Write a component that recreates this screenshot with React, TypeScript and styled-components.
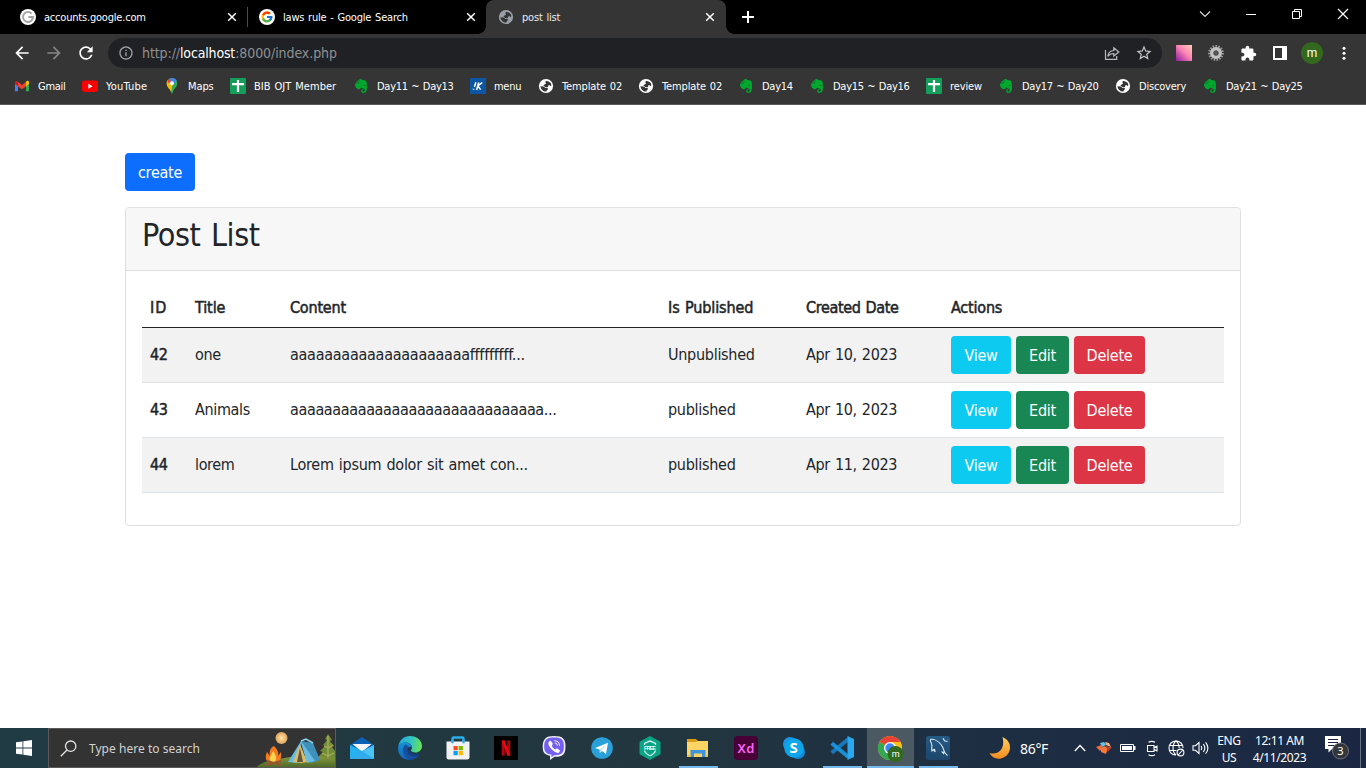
import React from 'react';
import styled, { createGlobalStyle, css } from 'styled-components';
import { MdArrowBack, MdArrowForward, MdRefresh, MdInfoOutline, MdStarBorder, MdExtension } from 'react-icons/md';
import { FaEvernote } from 'react-icons/fa';
import { FcGoogle } from 'react-icons/fc';

const uiFont = '"DejaVu Sans Condensed", "DejaVu Sans", sans-serif';
const shellFont = '"Noto Sans", "Open Sans", sans-serif';

const GlobalStyle = createGlobalStyle`
  *, *::before, *::after { box-sizing: border-box; }
  html, body { margin: 0; padding: 0; background: #fff; overflow: hidden; }
  body { font-family: ${uiFont}; font-stretch: condensed; }
  svg { display: block; flex: none; }
`;

const Screen = styled.div`
  width: 1366px;
  height: 768px;
  display: flex;
  flex-direction: column;
  background: #fff;
`;

/* ---------- browser frame ---------- */

const TabStrip = styled.header`
  height: 34px;
  flex: none;
  background: #000;
  display: flex;
  justify-content: space-between;
`;
const Tabs = styled.div`
  display: flex;
  padding-left: 8px;
`;
const Tab = styled.div<{ $active?: boolean; $divider?: boolean }>`
  position: relative;
  width: ${p => (p.$active ? 240 : 239)}px;
  height: 34px;
  display: flex;
  align-items: center;
  padding: 0 ${p => (p.$active ? 11 : 10)}px 0 12px;
  color: ${p => (p.$active ? '#e8eaed' : '#fff')};
  font-size: 11px;
  ${p => p.$active && css`
    background: #353535;
    border-radius: 8px 8px 0 0;
    &::before, &::after {
      content: '';
      position: absolute;
      bottom: 0;
      width: 8px;
      height: 8px;
    }
    &::before { left: -8px; background: radial-gradient(circle at 0 0, transparent 7.5px, #353535 8px); }
    &::after { right: -8px; background: radial-gradient(circle at 100% 0, transparent 7.5px, #353535 8px); }
  `}
  ${p => p.$divider && css`
    &::after {
      content: '';
      position: absolute;
      right: -1px;
      top: 7px;
      width: 1px;
      height: 20px;
      background: #4b4b4b;
    }
  `}
`;
const TabTitle = styled.span`
  flex: 1;
  margin-left: 8px;
  white-space: nowrap;
  letter-spacing: -0.2px;
  word-spacing: 0.9px;
`;
const NewTab = styled.div`
  width: 44px;
  display: grid;
  place-items: center;
`;
const WindowControls = styled.div`
  display: flex;
  height: 28px;
  & > svg { width: 46px; height: 28px; }
`;

const Toolbar = styled.div`
  height: 38px;
  flex: none;
  background: #353535;
  display: flex;
  align-items: center;
  color: #fff;
`;
const NavButtons = styled.div`
  width: 108px;
  display: flex;
  gap: 12px;
  padding-left: 12px;
`;
const AddressBar = styled.div`
  width: 1054px;
  height: 30px;
  border-radius: 15px;
  background: #202124;
  display: flex;
  align-items: center;
  padding: 0 9px 0 10px;
  color: #9aa0a6;
`;
const Address = styled.div`
  flex: 1;
  margin-left: 8px;
  color: #8d9093;
  font-size: 14px;
  letter-spacing: -0.08px;
  white-space: nowrap;
  b { font-weight: 400; color: #fff; letter-spacing: -0.16px; }
`;
const AddressActions = styled.div`
  display: flex;
  align-items: center;
  gap: 15px;
`;
const Extensions = styled.div`
  display: grid;
  grid-template-columns: repeat(6, 32px);
  place-items: center;
  padding-left: 6px;
`;
const Avatar = styled.div`
  width: 22px;
  height: 22px;
  border-radius: 50%;
  background: #33691e;
  font: 12px/22px Roboto, sans-serif;
  text-align: center;
`;

const Bookmarks = styled.nav`
  height: 33px;
  flex: none;
  background: #353535;
  border-bottom: 1px solid #5b5b5b;
  display: flex;
  padding: 0 0 4px 14px;
`;
const Bookmark = styled.div<{ $w: number; $track?: number }>`
  width: ${p => p.$w}px;
  display: flex;
  align-items: center;
  gap: 8px;
  color: #fff;
  font-size: 11px;
  letter-spacing: ${p => p.$track ?? -0.28}px;
  word-spacing: 0.7px;
  white-space: nowrap;
`;

/* ---------- page ---------- */

const Page = styled.main`
  flex: 1;
  padding: 48px 125px 0;
  color: #212529;
  font-size: 16px;
  line-height: 24px;
  letter-spacing: -0.36px;
  word-spacing: 0.9px;
`;
const buttonColors = {
  create: '#0d6efd',
  view: '#0dcaf0',
  edit: '#198754',
  remove: '#dc3545',
};
const Button = styled.button<{ $kind: keyof typeof buttonColors; $w: number }>`
  width: ${p => p.$w}px;
  height: 38px;
  border: 0;
  border-radius: 4px;
  padding: 1px 0 0;
  background: ${p => buttonColors[p.$kind]};
  color: #fff;
  font: inherit;
  letter-spacing: -0.25px;
  display: block;
`;
const Card = styled.section`
  margin-top: 16px;
  border: 1px solid #dfdfdf;
  border-radius: 4px;
  height: 319px;
`;
const CardHeader = styled.div`
  height: 63px;
  padding: 8px 16px;
  background: #f7f7f7;
  border-bottom: 1px solid #dfdfdf;
  border-radius: 3px 3px 0 0;
`;
const CardTitle = styled.h2`
  margin: 0;
  font-size: 32px;
  font-weight: 400;
  line-height: 38px;
  letter-spacing: -0.45px;
  word-spacing: 2px;
`;
const CardBody = styled.div`
  padding: 16px;
`;
const Row = styled.div<{ $head?: boolean; $striped?: boolean }>`
  display: grid;
  grid-template-columns: 45px 95px 378px 138px 145px 1fr;
  align-items: center;
  height: ${p => (p.$head ? 41 : 55)}px;
  padding-top: ${p => (p.$head ? 1 : 0)}px;
  border-bottom: 1px solid ${p => (p.$head ? '#212529' : '#dee2e6')};
  background: ${p => (p.$striped ? '#f2f2f2' : '#fff')};
`;
const Cell = styled.div<{ $strong?: boolean; $track?: number }>`
  padding-left: 8px;
  white-space: nowrap;
  ${p => p.$strong && css`-webkit-text-stroke: 0.5px #212529;`}
  letter-spacing: ${p => p.$track ?? -0.36}px;
`;
const Actions = styled.div`
  display: flex;
  gap: 5px;
  padding-left: 8px;
`;

/* ---------- taskbar ---------- */

const Taskbar = styled.footer`
  height: 40px;
  flex: none;
  display: flex;
  background: linear-gradient(90deg, #213b44 0%, #22363f 50%, #1e2f42 68%, #1b2742 100%);
  color: #fff;
  font-family: ${shellFont};
  font-stretch: normal;
  font-size: 12px;
`;
const Start = styled.div`
  width: 48px;
  flex: none;
  display: grid;
  place-items: center;
`;
const Search = styled.div`
  width: 288px;
  flex: none;
  margin-right: 2px;
  display: flex;
  align-items: center;
  background: #333;
  border: 1px solid #5c5b59;
  color: #d2d2d2;
  padding-left: 11px;
`;
const SearchHint = styled.span`
  flex: 1;
  margin-left: 12px;
  letter-spacing: 0.03px;
`;
const Slot = styled.div<{ $running?: boolean; $focused?: boolean }>`
  width: 48px;
  flex: none;
  height: 40px;
  display: grid;
  place-items: center;
  ${p => p.$running && css`background: linear-gradient(#76b9ed, #76b9ed) center bottom / 39px 2px no-repeat;`}
  ${p => p.$focused && css`background: linear-gradient(#76b9ed, #76b9ed) center bottom / 47px 2px no-repeat,
    linear-gradient(#4b5963, #4b5963) center / 47px 40px no-repeat;`}
`;
const Tray = styled.div`
  flex: 1;
  display: flex;
  align-items: center;
  padding-left: 26px;
  & > * { flex: none; }
`;
const Temperature = styled.div`
  width: 48px;
  margin-left: 8px;
  font-size: 14px;
  letter-spacing: -0.3px;
`;
const TraySlot = styled.div`
  width: 24px;
  display: grid;
  place-items: center;
`;
const Stack = styled.div<{ $w: number }>`
  width: ${p => p.$w}px;
  text-align: center;
  line-height: 17px;
  padding-top: 1px;
  letter-spacing: -0.4px;
  white-space: nowrap;
`;
const Notifications = styled.div`
  width: 47px;
  display: grid;
  place-items: center;
`;
const DesktopEdge = styled.div`
  width: 5px;
  height: 40px;
  border-left: 1px solid #66717f;
`;

/* ---------- icons ---------- */

const CloseGlyph = () => (
  <svg width="10" height="10" viewBox="0 0 10 10" stroke="#fff" strokeWidth="1.5"><path d="M1.2 1.2l7.6 7.6M8.800 1.200L1.200 8.800" /></svg>
);
const GoogleDisc = ({ gray }: { gray?: boolean }) => (
  <svg width="16" height="16" viewBox="0 0 16 16">
    <circle cx="8" cy="8" r="8" fill="#fff" />
    {gray
      ? <path d="M11.700 4.600A5 5 0 1 0 13 8H8.300" fill="none" stroke="#a6a6a6" strokeWidth="2" />
      : <FcGoogle x={1.500} y={1.500} size={13} />}
  </svg>
);
const Globe = ({ color = '#fff', hole = '#353535' }: { color?: string; hole?: string }) => (
  <svg width="16" height="16" viewBox="0 0 16 16">
    <circle cx="8" cy="8" r="7.100" fill={color} />
    <path d="M8 2.700c.9.600 3.600.2 5 2.900l.4 1.800-1.100.6-1-1-1.100.4c.3 1.300-.8 2.300-2 1.900-1.500-.1-1.500-1.100-2.800-1.500L6.500 6.500l1.600-.9-.8-1.300z" fill={hole} />
    <path d="M2.400 8.300l3 .1c1.400.1 1.400 1.200 2.300 1.500l1.800.1.700 1.200-1.400.8-.2 1.500c-3 .5-5.700-1.600-6.200-5.200z" fill={hole} />
  </svg>
);
const Gmail = () => (
  <svg width="16" height="16" viewBox="0 0 16 16">
    <path d="M1 4v9.200h3V7z" fill="#4285f4" /><path d="M15 4v9.200h-3V7z" fill="#34a853" />
    <path d="M12 5v3.400l3-2.300V4.300c0-1.600-1.800-2-3-.9z" fill="#fbbc04" />
    <path d="M4 8.400L8 11.300l4-2.900V3.800L8 6.900 4 3.800z" fill="#ea4335" />
    <path d="M1 4.300v1.800l3 2.300V3.800C2.800 2.500 1 2.900 1 4.300z" fill="#c5221f" />
  </svg>
);
const YouTube = () => (
  <svg width="16" height="16" viewBox="0 0 16 16"><rect y="2.500" width="16" height="11.500" rx="3" fill="#f00" /><path d="M6.400 5.800v4.900l4.200-2.450z" fill="#fff" /></svg>
);
const Maps = () => (
  <svg width="16" height="16" viewBox="0 0 16 16">
    <path d="M8 0c3.200 0 5.300 2.400 5.300 5.300 0 4-4 5.300-4.700 9.700-.2.900-1 .9-1.200 0C6.700 10.700 2.700 9.300 2.700 5.300 2.700 2.400 4.900 0 8 0z" fill="#34a853" />
    <path d="M3.900 2L8 5.500 3.700 9.100C2.200 6.800 2.300 3.800 3.900 2z" fill="#fbbc04" />
    <path d="M3.900 2a5.200 5.200 0 0 1 2.500-1.700L7 4.200 3.600 5z" fill="#ea4335" />
    <path d="M6.200.4C8.800-.5 11.500.6 12.700 3L8 8z" fill="#4285f4" />
    <path d="M3.700 9.100l4.600-4 .9 4.600L7 13.700c-.8-1.900-2-2.900-3.300-4.600z" fill="#fbbc04" />
    <path d="M12.700 3c1.500 4.300-2.700 6.200-3.900 10.500L7.500 13 8 8.300z" fill="#34a853" />
    <circle cx="8" cy="5.300" r="2" fill="#fff" />
  </svg>
);
const Sheet = () => (
  <svg width="16" height="16" viewBox="0 0 16 16"><rect width="16" height="16" rx="1" fill="#139f5a" /><path d="M2 6.200h12M8 2v12" stroke="#fff" strokeWidth="2.200" /></svg>
);
const Evernote = () => <FaEvernote size={16} color="#00a82d" />;
const MenuLogo = () => (
  <svg width="16" height="16" viewBox="0 0 16 16"><rect width="16" height="16" fill="#0b57a4" /><path d="M5.900 4.200L4.400 9M3.700 10.800l-.3 1M12.300 4.500L8 7.800M8.700 4.500L6.600 12M7.900 8l2.700 3.600" stroke="#fff" strokeWidth="1.500" fill="none" /></svg>
);

const shortcuts: { label: string; w: number; icon: React.ReactNode; track?: number }[] = [
  { label: 'Gmail', w: 68, icon: <Gmail /> },
  { label: 'YouTube', w: 82, icon: <YouTube />, track: 0.2 },
  { label: 'Maps', w: 66, icon: <Maps />, track: -0.1 },
  { label: 'BIB OJT Member', w: 123, icon: <Sheet />, track: 0.04 },
  { label: 'Day11 ~ Day13', w: 117, icon: <Evernote /> },
  { label: 'menu', w: 68, icon: <MenuLogo /> },
  { label: 'Template 02', w: 100, icon: <Globe />, track: -0.12 },
  { label: 'Template 02', w: 100, icon: <Globe />, track: -0.12 },
  { label: 'Day14', w: 71, icon: <Evernote /> },
  { label: 'Day15 ~ Day16', w: 117, icon: <Evernote /> },
  { label: 'review', w: 72, icon: <Sheet />, track: -0.1 },
  { label: 'Day17 ~ Day20', w: 117, icon: <Evernote /> },
  { label: 'Discovery', w: 87, icon: <Globe />, track: -0.2 },
  { label: 'Day21 ~ Day25', w: 120, icon: <Evernote /> },
];

const columns: { label: string; track: number }[] = [
  { label: 'ID', track: 1 },
  { label: 'Title', track: -0.1 },
  { label: 'Content', track: -0.2 },
  { label: 'Is Published', track: -0.1 },
  { label: 'Created Date', track: -0.35 },
  { label: 'Actions', track: -0.2 },
];

const posts = [
  { id: 42, title: 'one', content: 'aaaaaaaaaaaaaaaaaaaaafffffffff...', state: 'Unpublished', date: 'Apr 10, 2023', track: -0.26 },
  { id: 43, title: 'Animals', content: 'aaaaaaaaaaaaaaaaaaaaaaaaaaaaaa...', state: 'published', date: 'Apr 10, 2023' },
  { id: 44, title: 'lorem', content: 'Lorem ipsum dolor sit amet con...', state: 'published', date: 'Apr 11, 2023', track: -0.27 },
];

const Campsite = () => (
  <svg width="78" height="38" viewBox="0 0 78 38">
    <defs>
      <linearGradient id="hill" x1="0" y1="0" x2="0" y2="1"><stop stopColor="#8b9a3c" /><stop offset="1" stopColor="#4d6b2b" /></linearGradient>
      <radialGradient id="moonDisc"><stop stopColor="#ffe3a1" /><stop offset="1" stopColor="#dfa35f" /></radialGradient>
    </defs>
    <path d="M71 5l4 6-2 1 4 5-2 1 3 4v10H62V27l4-4-3-1 5-5-2-1 4-5-2-1z" fill="#718d3a" />
    <path d="M71 7v23M67 17l4 2 5-3M65 24l6 3 6-3" stroke="#a9ae56" strokeWidth="1.300" fill="none" />
    <path d="M0 38c4-5 13-6 22-8 18-4 36-4 56 0v8z" fill="url(#hill)" />
    <circle cx="24.500" cy="9" r="6" fill="url(#moonDisc)" />
    <path d="M17 17c4 4 5 7 4 10l3-4c1 6-1 10-5 11h-6c-5-2-5-7-3-11l3 4c-1-4 0-8 4-10z" fill="#f47b20" />
    <path d="M16 22c3 4 4 7 2 11h-4c-3-4 0-6 2-11z" fill="#ffd34e" />
    <path d="M9 36l15-4M10 32l14 4" stroke="#96572d" strokeWidth="2.300" />
    <path d="M44 12l12 2 7 17-9 3z" fill="#3f91bc" /><path d="M44 12L31 33l9 1 4-20 6 20 8-2z" fill="#66bce1" />
    <path d="M43 15l-7 18 8 1 6-1z" fill="#d8bd73" /><path d="M43 19l-3 14h6z" fill="#665638" />
    <path d="M44 12l5-2 7 4" stroke="#8bd8ef" strokeWidth="1.500" fill="none" />
  </svg>
);

const MailIcon = () => (
  <svg width="24" height="24" viewBox="0 0 24 24">
    <path d="M0 9L12 1l12 8v4H0z" fill="#0b60b5" /><path d="M2.500 8h19L12 16z" fill="#f4f5f8" />
    <path d="M0 9l12 6L24 9v14H0z" fill="#25b1ef" /><path d="M0 23L24 9v14z" fill="#5bcbf7" opacity=".7" /><path d="M12 15L24 23H0z" fill="#2aa5eb" opacity=".8" />
  </svg>
);
const EdgeIcon = () => (
  <svg width="24" height="24" viewBox="0 0 24 24">
    <defs>
      <linearGradient id="edgeTop" x1="0" y1=".4" x2="1" y2=".5"><stop stopColor="#20a6df" /><stop offset=".55" stopColor="#35c6bd" /><stop offset="1" stopColor="#6be34f" /></linearGradient>
      <linearGradient id="edgeSide" x1="0" y1="0" x2="0" y2="1"><stop stopColor="#1692d8" /><stop offset="1" stopColor="#1064b7" /></linearGradient>
    </defs>
    <path d="M.4 10C1.300 4 6 0 12 0c7 0 12 4.600 12 10 0 4-3 6.500-6.500 6.500-3 0-4.500-1-4.500-1.900 0-.8 1-1.400 1-3C14 8.800 11.200 6.600 7.700 6.600 4.500 6.600 1.700 8 .4 10z" fill="url(#edgeTop)" />
    <path d="M.3 10.300C1.200 7.800 4.300 6.300 7.700 6.600c3.500.1 6.100 2.200 6.200 4.800-1.300-1.100-3.800-.7-4.800 1.700-1.300 3.300.7 8.400 5.200 10.200C7.200 25.400.8 20.800.1 14z" fill="url(#edgeSide)" />
    <path d="M9.700 12c-1.700 1.500-2 5.500.2 8.300 2.500 3.200 7 2.800 11-1.400 1.300-1 .4-2-.8-1.400-3.400 1.500-8.200.4-10.400-5.500z" fill="#123f82" /><path d="M7.500 8.300C3.600 12 4.200 19.700 11.200 23.800 14.500 24.300 19 22.500 21.600 18.700c-3 2.200-8.200 2.600-11-1-2.300-2.700-1.500-6 .4-6.900-1-.8-2.400-1.700-3.500-2.500z" fill="#174f9e" />
  </svg>
);
const StoreIcon = () => (
  <svg width="24" height="24" viewBox="0 0 24 24">
    <path d="M6.500 7V2.500q0-1 1-1h9q1 0 1 1V7" fill="none" stroke="#29aee8" strokeWidth="2.400" /><path d="M.5 5.500h23v16q0 2-2 2h-19q-2 0-2-2z" fill="#f2f2f2" /><path d="M6.500 4v3.300M17.500 4v3.300" stroke="#29aee8" strokeWidth="2.400" />
    <path d="M7.500 10h4.300v4.200H7.500z" fill="#f25022" /><path d="M12.600 10h4.300v4.200h-4.300z" fill="#7fba00" /><path d="M7.500 15h4.300v4.200H7.500z" fill="#00a4ef" /><path d="M12.600 15h4.300v4.200h-4.300z" fill="#ffb900" />
  </svg>
);
const NetflixIcon = () => (
  <svg width="24" height="24" viewBox="0 0 24 24"><rect width="24" height="24" fill="#000" /><path d="M7.700 4.500h3V19.500l-3 .3zM13.300 4.500h3v15.300l-3-.3z" fill="#b20710" /><path d="M7.700 4.500h3l5.600 15.300-3-.3z" fill="#e50914" /></svg>
);
const ViberIcon = () => (
  <svg width="24" height="24" viewBox="0 0 24 24">
    <path d="M12 0c9 0 11.500 3 11.500 10.500S21 21 12.500 20.800L8 24v-4.200C2 18.500.7 16 .7 10.500.7 3 4 0 12 0z" fill="#f2eefb" />
    <path d="M12 1.600c7.800 0 9.900 2.400 9.900 8.900s-2.200 8.800-9.900 8.700l-2.600 2.100v-2.700C3.600 17.700 2.200 15.500 2.200 10.500c0-6.500 2.500-8.900 9.800-8.900z" fill="#7360f2" />
    <path d="M7 5.500l1.800-.7 2 3-.9 1.600c.4 2 1.500 3.200 3.500 4l1.600-1.200 3 2.200-.7 1.900c-1.100 1.400-3.300.4-5.900-1.500-3-2.300-5-5.200-5.100-7.600z" fill="#fff" /><path d="M12.500 4.700c3.200.2 5 2 5 5M12.700 7c1.700.1 2.500 1 2.600 2.600" stroke="#fff" fill="none" />
  </svg>
);
const TelegramIcon = () => (
  <svg width="24" height="24" viewBox="0 0 24 24"><circle cx="12" cy="12" r="10.800" fill="#2aa0da" /><path d="M5 12l13-5.300-2 11.300-4-3-2.200 2v-3.200z" fill="#fff" /><path d="M9.800 13.800L16 8.800l-4.700 5.700-1.500 2.500z" fill="#b9d9ea" /></svg>
);
const FreeIcon = () => (
  <svg width="24" height="24" viewBox="0 0 24 24"><path d="M12 0l10.500 5.800v12.400L12 24 1.500 18.200V5.800z" fill="#0aa384" /><path d="M6.500 9V7.500L12 5l5.500 2.500V9M6.500 14.700c.6 2 2.500 3.800 5.500 5 3-1.200 5-3 5.500-5" stroke="#eaffff" strokeWidth="1.200" fill="none" /><text x="6" y="13.900" textLength="12" fontSize="5.500" fontFamily="Liberation Sans" fontWeight="700" fill="#eaffff">FREE</text></svg>
);
const FolderIcon = () => (
  <svg width="24" height="24" viewBox="0 0 24 24"><path d="M1 3h9l2 2h10v5H1z" fill="#dc9b14" /><path d="M1 6h9l1.500-1H22v16H1z" fill="#ffd463" /><path d="M4.500 21v-7h15v7h-3.500v-3.500H8V21z" fill="#3d96dd" /><path d="M1 19h3.500v2H1zM19.500 19H22v2h-2.500z" fill="#f3bd40" /></svg>
);
const XdIcon = () => (
  <svg width="24" height="24" viewBox="0 0 24 24"><rect width="24" height="24" rx="4" fill="#470137" /><text x="3.500" y="16.500" textLength="17" fontFamily="Noto Sans" fontWeight="600" fontSize="13" fill="#ff61f6">Xd</text></svg>
);
const SkypeIcon = () => (
  <svg width="24" height="24" viewBox="0 0 24 24"><circle cx="8" cy="8" r="7" fill="#1b93e4" /><circle cx="16" cy="16" r="7" fill="#1686db" /><circle cx="12" cy="12" r="9.700" fill="#0ea6ea" /><text x="7.600" y="17.200" fontFamily="Noto Sans" fontWeight="700" fontSize="15" fill="#fff">S</text></svg>
);
const CodeIcon = () => (
  <svg width="24" height="24" viewBox="0 0 24 24" fill="none">
    <path d="M1.700 16.700L18.500 3" stroke="#1777b8" strokeWidth="4" /><path d="M1.700 7.300L18.500 21" stroke="#1a90d6" strokeWidth="4" /><path d="M17.500 0L24 3v18l-6.500 3z" fill="#2aa9ee" />
  </svg>
);
const ChromeIcon = () => (
  <svg width="28" height="24" viewBox="-2 0 28 24" overflow="visible">
    <circle cx="12" cy="12" r="12" fill="#fbc116" /><path d="M12 12L1.600 6A12 12 0 0 1 22.400 6z" fill="#ea4335" /><path d="M12 12L1.600 6A12 12 0 0 0 12 24l5-9z" fill="#34a853" /><path d="M12 6h10.400A12 12 0 0 1 12 24l5.200-9z" fill="#fbc116" />
    <circle cx="12" cy="12" r="6" fill="#fff" /><circle cx="12" cy="12" r="4.700" fill="#4285f4" /><circle cx="17.500" cy="18" r="8" fill="#33691e" /><text x="13.700" y="21" fontFamily="Roboto" fontSize="9" fill="#fff">m</text>
  </svg>
);
const DolphinIcon = () => (
  <svg width="24" height="24" viewBox="0 0 24 24">
    <defs><linearGradient id="sea" x1="0" y1="0" x2="0" y2="1"><stop stopColor="#255a86" /><stop offset="1" stopColor="#1d466c" /></linearGradient></defs>
    <rect width="24" height="24" rx="2.500" fill="url(#sea)" />
    <path d="M4.500 3.500c3-.8 7.500 1.500 10.500 5 2.200 2.700 2.500 5.200 3.700 8l2.800 3.200M4.500 3.500c-.8 1.500 1 3 1.300 5.200.3 2.500-.6 4 .2 6.300l1.200-1.500 2 2.300-.8-3M18.700 16.500l-2.400-.4 1.700 2" stroke="#dce8ee" strokeWidth="1.100" fill="none" />
    <path d="M17 2.200l1.500 2.600 3 .7" stroke="#dce8ee" strokeWidth="1.200" fill="none" />
  </svg>
);

const taskApps: { name: string; icon: React.ReactNode; running?: boolean; focused?: boolean }[] = [
  { name: 'mail', icon: <MailIcon /> }, { name: 'edge', icon: <EdgeIcon /> }, { name: 'store', icon: <StoreIcon /> },
  { name: 'netflix', icon: <NetflixIcon /> }, { name: 'viber', icon: <ViberIcon /> }, { name: 'telegram', icon: <TelegramIcon /> },
  { name: 'vpn', icon: <FreeIcon /> }, { name: 'files', icon: <FolderIcon />, running: true }, { name: 'xd', icon: <XdIcon /> },
  { name: 'skype', icon: <SkypeIcon /> }, { name: 'code', icon: <CodeIcon />, running: true },
  { name: 'chrome', icon: <ChromeIcon />, focused: true }, { name: 'database', icon: <DolphinIcon />, running: true },
];

const BrowserFrame = () => (
  <>
    <TabStrip>
      <Tabs>
        <Tab $divider><GoogleDisc gray /><TabTitle>accounts.google.com</TabTitle><CloseGlyph /></Tab>
        <Tab><GoogleDisc /><TabTitle>laws rule - Google Search</TabTitle><CloseGlyph /></Tab>
        <Tab $active><Globe color="#9aa0a6" /><TabTitle>post list</TabTitle><CloseGlyph /></Tab>
        <NewTab><svg width="12" height="12" viewBox="0 0 12 12"><path d="M6 0v12M0 6h12" stroke="#fff" strokeWidth="2" /></svg></NewTab>
      </Tabs>
      <WindowControls>
        <svg viewBox="0 0 46 28"><path d="M18 11.500l5 5 5-5" fill="none" stroke="#ddd" strokeWidth="1.100" /></svg>
        <svg viewBox="0 0 46 28"><path d="M18 14.500h10" stroke="#fff" /></svg>
        <svg viewBox="0 0 46 28"><path d="M18.500 11.500h7v7h-7zM20.500 11V9.500h7v7H26" fill="none" stroke="#fff" /></svg>
        <svg viewBox="0 0 46 28"><path d="M18 9l10 10M28 9L18 19" stroke="#fff" strokeWidth="1.200" /></svg>
      </WindowControls>
    </TabStrip>
    <Toolbar>
      <NavButtons><MdArrowBack size={20} /><MdArrowForward size={20} color="#858585" /><MdRefresh size={20} /></NavButtons>
      <AddressBar>
        <MdInfoOutline size={16} />
        <Address>http://<b>localhost</b>:8000/index.php</Address>
        <AddressActions>
          <svg width="16" height="16" viewBox="0 0 16 16" fill="none" stroke="#b8bbbe" strokeWidth="1.200"><path d="M1.500 5v9.400h11.200V11" /><path d="M3.800 11.300c.5-4 2.600-5.600 6-5.800V2.800L14.800 7l-5 4V8.500c-2.800 0-4.500.7-6 2.800z" /></svg>
          <MdStarBorder size={18} color="#c4c7c9" />
        </AddressActions>
      </AddressBar>
      <Extensions>
        <svg width="16" height="16" viewBox="0 0 16 16"><defs><linearGradient id="pink" x1="0" y1="1" x2="1" y2="0"><stop stopColor="#8d1ba0" /><stop offset=".55" stopColor="#ff86b4" /><stop offset="1" stopColor="#ffd1b8" /></linearGradient></defs><rect width="16" height="16" fill="url(#pink)" /></svg>
        <svg width="16" height="16" viewBox="0 0 16 16"><circle cx="8" cy="8" r="6.700" fill="none" stroke="#999" strokeWidth="2.400" strokeDasharray="1.600 1.200" /><circle cx="8" cy="8" r="4.300" fill="none" stroke="#c2c2c2" strokeWidth="3.400" /><circle cx="8" cy="8" r="2.400" fill="#555" /></svg>
        <MdExtension size={17} />
        <svg width="14" height="14" viewBox="0 0 14 14"><path d="M1 1h12v12H1z" fill="none" stroke="#fff" strokeWidth="2" /><path d="M9 1h4v12H9z" fill="#fff" /></svg>
        <Avatar>m</Avatar>
        <svg width="16" height="16" viewBox="0 0 16 16" fill="#fff"><circle cx="8" cy="3.200" r="1.500" /><circle cx="8" cy="8.200" r="1.500" /><circle cx="8" cy="13.200" r="1.500" /></svg>
      </Extensions>
    </Toolbar>
    <Bookmarks>
      {shortcuts.map((s, i) => <Bookmark key={i} $w={s.w} $track={s.track}>{s.icon}<span>{s.label}</span></Bookmark>)}
    </Bookmarks>
  </>
);

const PostPage = () => (
  <Page>
    <Button $kind="create" $w={70}>create</Button>
    <Card>
      <CardHeader><CardTitle>Post List</CardTitle></CardHeader>
      <CardBody>
        <Row $head>
          {columns.map(c => <Cell key={c.label} $strong $track={c.track}>{c.label}</Cell>)}
        </Row>
        {posts.map((post, i) => (
          <Row key={post.id} $striped={i % 2 === 0}>
            <Cell $strong>{post.id}</Cell>
            <Cell>{post.title}</Cell>
            <Cell $track={post.track}>{post.content}</Cell>
            <Cell $track={-0.28}>{post.state}</Cell>
            <Cell>{post.date}</Cell>
            <Actions>
              <Button $kind="view" $w={60}>View</Button>
              <Button $kind="edit" $w={53}>Edit</Button>
              <Button $kind="remove" $w={71}>Delete</Button>
            </Actions>
          </Row>
        ))}
      </CardBody>
    </Card>
  </Page>
);

const DesktopTaskbar = () => (
  <Taskbar>
    <Start><svg width="16" height="16" viewBox="0 0 16 16" fill="#fff"><path d="M0 2.300l6.500-.9v6.100H0zM7.300 1.300L16 0v7.500H7.300zM0 8.400h6.500v6.200L0 13.700zM7.300 8.400H16V16l-8.700-1.300z" /></svg></Start>
    <Search>
      <svg width="17" height="17" viewBox="0 0 17 17" fill="none" stroke="#e4e4e4" strokeWidth="1.300"><circle cx="10.700" cy="6.200" r="5.200" /><path d="M7 10L.8 16.200" /></svg>
      <SearchHint>Type here to search</SearchHint>
      <Campsite />
    </Search>
    {taskApps.map(a => <Slot key={a.name} $running={a.running} $focused={a.focused}>{a.icon}</Slot>)}
    <Tray>
      <svg width="24" height="24" viewBox="0 0 24 24"><defs><linearGradient id="moon" x1="0" y1="0" x2="0" y2="1"><stop stopColor="#ffd15d" /><stop offset="1" stopColor="#f18b20" /></linearGradient></defs><path d="M14.500 1c11 4.500 9.500 18.500-1.500 21.500C8 23.500 3.500 21 1.500 17c9 2.500 16-4 13-16z" fill="url(#moon)" /></svg>
      <Temperature>86°F</Temperature>
      <TraySlot><svg width="12" height="8" viewBox="0 0 12 8"><path d="M.8 7L6 1.500 11.200 7" fill="none" stroke="#fff" strokeWidth="1.300" /></svg></TraySlot>
      <TraySlot><svg width="16" height="14" viewBox="0 0 16 14"><path d="M4 2l4-1 2 3-4 2z" fill="#64c3e8" /><path d="M9 1l4 1 2 4-5-2z" fill="#f3b18c" /><path d="M0 6l5-2 2 3-3 3z" fill="#ee6a40" /><path d="M5 8l3-3 4 2-2 6-5-2z" fill="#f37935" /><path d="M10 5l6 1-4 5z" fill="#b9412f" /></svg></TraySlot>
      <TraySlot><svg width="16" height="10" viewBox="0 0 16 10"><path d="M.5 1.500h13v7H.5z" fill="none" stroke="#fff" /><path d="M2 3h10v4H2zM14 3h1.500v4H14z" fill="#fff" /></svg></TraySlot>
      <TraySlot><svg width="13" height="17" viewBox="0 0 13 17" fill="none" stroke="#fff" strokeWidth="1.100"><path d="M1.500 5.500H8v6H1.500zM8 7.500l3-1.300v4.600L8 9.500M2.500 2.300c2-1.200 4.500-1.200 6.500 0M2.500 14.700c2 1.200 4.500 1.200 6.500 0" /></svg></TraySlot>
      <TraySlot><svg width="17" height="17" viewBox="0 0 17 17" fill="none" stroke="#fff" strokeWidth="1.100"><path d="M8 15C4 15.300 1 12 1 8s3-7 7-7 7 3 7 7M8 1C4 4 4 12 8 15M8 1c2.500 2 3.200 4.500 3.200 7M1.500 5.500h13M1.500 10.500h7" /><circle cx="12.500" cy="12.500" r="3.400" /><path d="M10.200 15l4.600-5" /></svg></TraySlot>
      <TraySlot><svg width="17" height="14" viewBox="0 0 17 14" fill="none" stroke="#fff" strokeWidth="1.100"><path d="M1 4.700h2.500L7 1.500v11L3.500 9.300H1zM9 5c1 1.300 1 2.700 0 4M11.300 3.200c2 2.400 2 5.200 0 7.600M13.600 1.300c3 3.700 3 7.700 0 11.400" /></svg></TraySlot>
      <Stack $w={34}>ENG<br />US</Stack>
      <Stack $w={67}>12:11 AM<br />4/11/2023</Stack>
      <Notifications>
        <svg width="26" height="26" viewBox="0 0 26 26"><path d="M1 1h16v13H8l-3.500 3.500V14H1z" fill="#fff" /><path d="M4 4.500h10M4 7.500h10M4 10.500h6" stroke="#1b2742" /><circle cx="16.500" cy="16" r="8" fill="#33373c" stroke="#6c7077" /><text x="13.300" y="20" fontFamily="Noto Sans" fontSize="11" fill="#fff">3</text></svg>
      </Notifications>
      <DesktopEdge />
    </Tray>
  </Taskbar>
);

export default function App() {
  return (
    <Screen>
      <GlobalStyle />
      <BrowserFrame />
      <PostPage />
      <DesktopTaskbar />
    </Screen>
  );
}
